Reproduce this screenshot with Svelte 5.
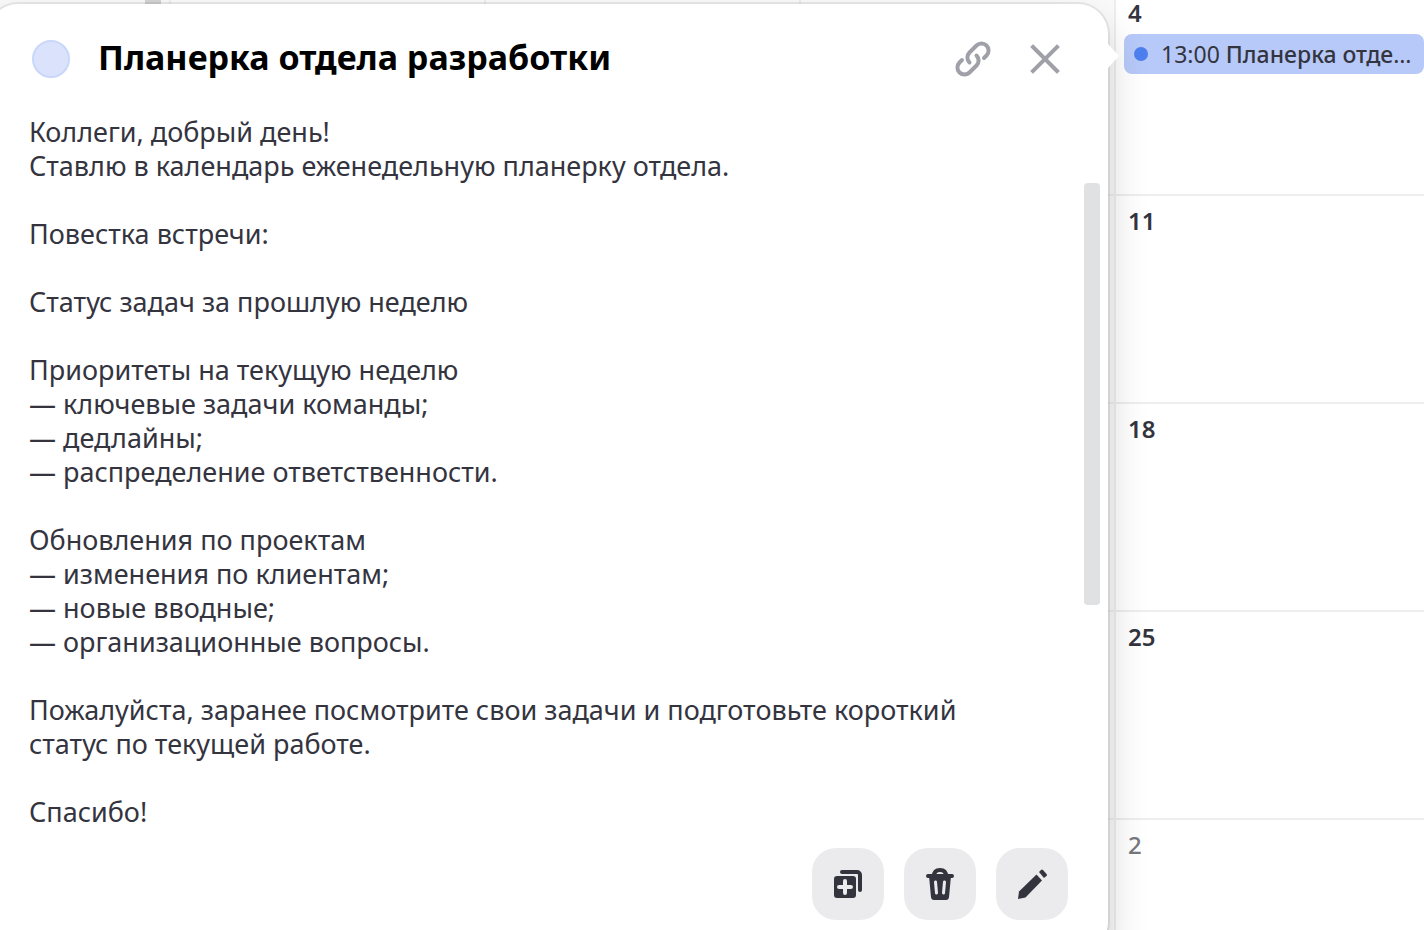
<script>
    const weeks = [
        { day : "4", event : { time : "13:00", title : "Планерка отдела разработки" } },
        { day : "11" },
        { day : "18" },
        { day : "25" },
        { day : "2", nextMonth : true }
    ]

    const description = `Коллеги, добрый день!
Ставлю в календарь еженедельную планерку отдела.

Повестка встречи:

Статус задач за прошлую неделю

Приоритеты на текущую неделю
— ключевые задачи команды;
— дедлайны;
— распределение ответственности.

Обновления по проектам
— изменения по клиентам;
— новые вводные;
— организационные вопросы.

Пожалуйста, заранее посмотрите свои задачи и подготовьте короткий статус по текущей работе.

Спасибо!`

    let popupOpen = $state(true)
</script>

<main class="page">
    <div class="calendar">
        {#each weeks as week}
            <div class="week">
                <div class="side"></div>
                <div class="day"></div>
                <div class="day"></div>
                <div class="day"></div>
                <div class="day last">
                    <span class="number" class:muted={week.nextMonth}>{week.day}</span>
                    {#if week.event}
                        <button class="event" onclick={() => popupOpen = true}>
                            <span class="dot"></span>
                            <span class="eventText">{week.event.time} <b>{week.event.title}</b></span>
                        </button>
                    {/if}
                </div>
            </div>
        {/each}
    </div>
    <div class="sideScroll"></div>

    {#if popupOpen}
        <section class="popup" aria-labelledby="popupTitle">
            <header>
                <span class="color"></span>
                <h1 id="popupTitle">Планерка отдела разработки</h1>
                <button class="plain" aria-label="Скопировать ссылку">
                    <svg width="36" height="36" viewBox="0 0 36 36">
                        <path d="M14.5 21.5A7 7 0 0 1 14.5 11.5L21.5 4.5A7 7 0 0 1 31.5 14.5L29 17" />
                        <path d="M21.5 14.5A7 7 0 0 1 21.5 24.5L14.5 31.5A7 7 0 0 1 4.5 21.5L7 19" />
                    </svg>
                </button>
                <button class="plain" aria-label="Закрыть" onclick={() => popupOpen = false}>
                    <svg width="32" height="32" viewBox="0 0 32 32">
                        <path class="cross" d="M4 4L28 28M28 4L4 28" />
                    </svg>
                </button>
            </header>

            <p class="description">{description}</p>

            <footer>
                <button class="action" aria-label="Дублировать">
                    <svg width="28" height="28" viewBox="0 0 28 28">
                        <rect y="6" width="22" height="22" rx="3" />
                        <path class="cut" d="M5 17H17M11 11V23" />
                        <path class="line" d="M8 2H23A3 3 0 0 1 26 5V20" />
                    </svg>
                </button>
                <button class="action" aria-label="Удалить">
                    <svg width="28" height="32" viewBox="0 0 28 32">
                        <path class="line" d="M2 8H26M8 8C8 4 10 2 14 2S20 4 20 8" />
                        <path d="M3 8H25L23 29Q22.700 32 20 32H8Q5.300 32 5 29Z" />
                        <path class="slot" d="M9.500 14L10.500 25M18.500 14L17.500 25" />
                    </svg>
                </button>
                <button class="action" aria-label="Редактировать">
                    <svg width="30" height="30" viewBox="0 0 30 30">
                        <path d="M1 30L2 22.500L19.500 5.500L25 11.500L8.500 28.500Z" />
                        <path d="M22 3L24 1Q25 0 26 1L30 5.500L30 6.500L27 9Z" />
                    </svg>
                </button>
            </footer>

            <div class="scrollThumb"></div>
        </section>
    {/if}
</main>

<style>
    :global(body) {
        background: white;
        overflow: hidden;
    }

    .page {
        position: relative;
        height: 100vh;
        overflow: hidden;
        font-family: "Noto Sans", "Open Sans", sans-serif;
        color: #34343f;
    }

    button {
        font: inherit;
        color: inherit;
        border: none;
        padding: 0;
        cursor: pointer;
    }

    svg { display: block; }

    /* the month is scrolled a little past the top of the first week */
    .calendar { margin-top: -14px; }

    .week {
        display: grid;
        grid-template-columns: 169px repeat(3, 315fr) 310fr;
        height: 208px;
    }

    .side { background: #f9f9f9; }

    .day {
        box-sizing: border-box;
        min-width: 0;
        border-top: 2px solid #eeeeef;
        border-left: 2px solid #eeeeef;
        background: #fafafa;
    }

    .last {
        display: flex;
        flex-direction: column;
        padding: 12px 0 0 8px;
        background: white;
    }

    .number {
        padding-left: 4px;
        font-size: 24px;
        line-height: 26px;
        font-weight: 600;
    }

    .muted {
        color: #77777e;
        font-weight: 500;
    }

    .event {
        display: flex;
        align-items: center;
        gap: 13px;
        height: 40px;
        margin-top: 8px;
        padding: 0 10px;
        border-radius: 8px;
        background: #b7c9f8;
        text-align: left;
    }

    .dot {
        flex: none;
        width: 14px;
        height: 14px;
        border-radius: 50%;
        background: #4d7fee;
    }

    .eventText {
        overflow: hidden;
        white-space: nowrap;
        text-overflow: ellipsis;
        font-size: 23px;
        line-height: 34px;
    }

    .eventText b { font-weight: 500; }

    .sideScroll {
        position: absolute;
        top: -40px;
        left: 145px;
        width: 16px;
        height: 60px;
        background: #d4d4d4;
    }

    .popup {
        position: absolute;
        top: 4px;
        left: -12px;
        right: 316px;
        border-radius: 30px;
        background: white;
        box-shadow: 0 0 0 2px rgba(0, 0, 0, 0.07), 0 20px 40px rgba(0, 0, 0, 0.18);
    }

    /* arrow towards the event */
    .popup::after {
        content: "";
        position: absolute;
        top: 40px;
        right: -11px;
        border-style: solid;
        border-width: 12px 0 12px 11px;
        border-color: transparent transparent transparent white;
    }

    header {
        display: flex;
        align-items: center;
        padding: 28px 47px 0 44px;
    }

    .color {
        box-sizing: border-box;
        width: 38px;
        height: 38px;
        border: 2px solid #c8d7fa;
        border-radius: 50%;
        background: #dbe3fc;
    }

    h1 {
        flex: 1;
        margin: 0 0 0 28px;
        padding-bottom: 4px;
        font-size: 34px;
        line-height: 50px;
        font-weight: 700;
        color: black;
    }

    .plain {
        margin-left: 38px;
        background: none;
    }

    .plain path {
        fill: none;
        stroke: #a0a0a8;
        stroke-width: 4;
        stroke-linecap: round;
    }

    .plain .cross { stroke-linecap: square; }

    .description {
        margin: 0;
        padding: 29px 120px 0 41px;
        font-size: 27px;
        line-height: 34px;
        white-space: pre-line;
    }

    footer {
        display: flex;
        justify-content: flex-end;
        gap: 20px;
        padding: 19px 40px 32px;
    }

    .action {
        display: flex;
        align-items: center;
        justify-content: center;
        width: 72px;
        height: 72px;
        border-radius: 24px;
        background: #ebebed;
    }

    .action svg { fill: #34343f; }

    .line, .cut, .slot {
        fill: none;
        stroke: #34343f;
        stroke-width: 4;
        stroke-linecap: round;
    }

    .cut { stroke: #ebebed; }

    .slot {
        stroke: #ebebed;
        stroke-width: 3;
    }

    .scrollThumb {
        position: absolute;
        top: 179px;
        right: 8px;
        width: 16px;
        height: 422px;
        border-radius: 4px;
        background: #e0e1e3;
    }
</style>
